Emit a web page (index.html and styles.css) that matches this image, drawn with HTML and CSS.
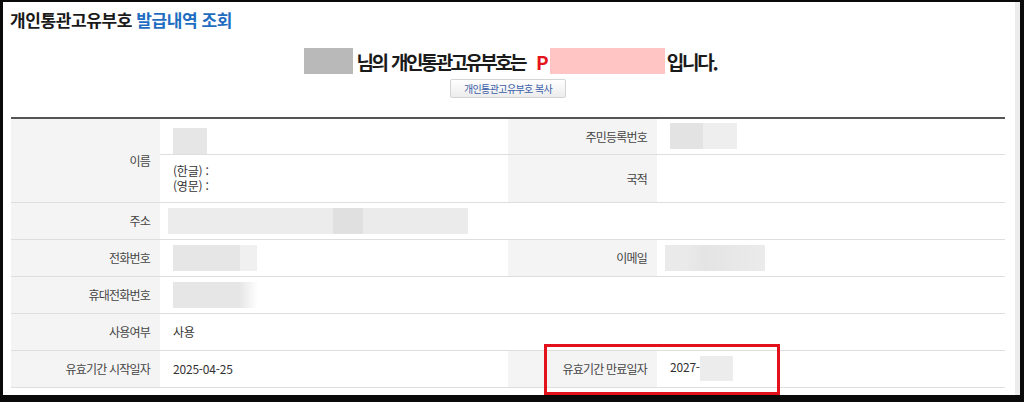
FILE: index.html
```html
<!DOCTYPE html>
<html lang="ko">
<head>
    <meta charset="UTF-8">
    <meta name="viewport" content="width=device-width, initial-scale=1.0">
    <title>개인통관고유부호 발급내역 조회</title>
    <link rel="stylesheet" href="styles.css">
</head>
<body>
    <div class="capture">
        <h2 class="page-title">개인통관고유부호 <span class="accent">발급내역 조회</span></h2>

        <div class="result-line">
            <span class="mask mask-name"></span>
            <span class="result-text">님의 개인통관고유부호는</span>
            <span class="code-prefix">P</span>
            <span class="mask mask-code"></span>
            <span class="result-tail">입니다.</span>
        </div>
        <div class="copy-row">
            <button class="copy-btn">개인통관고유부호 복사</button>
        </div>

        <table class="info-table">
            <colgroup>
                <col class="col-label">
                <col class="col-value">
                <col class="col-label">
                <col class="col-value">
            </colgroup>
            <tr class="row-a">
                <th rowspan="2">이름</th>
                <td class="cell-top"><span class="blur blur-name"></span></td>
                <th>주민등록번호</th>
                <td><span class="blur blur-rrn"></span></td>
            </tr>
            <tr class="row-b">
                <td class="two-lines">(한글) :<br>(영문) :</td>
                <th>국적</th>
                <td></td>
            </tr>
            <tr>
                <th>주소</th>
                <td colspan="3" class="pad-less"><span class="blur blur-addr"></span></td>
            </tr>
            <tr>
                <th>전화번호</th>
                <td><span class="blur blur-phone"></span></td>
                <th>이메일</th>
                <td class="pad-less"><span class="blur blur-mail"></span></td>
            </tr>
            <tr>
                <th>휴대전화번호</th>
                <td colspan="3"><span class="blur blur-mobile"></span></td>
            </tr>
            <tr>
                <th>사용여부</th>
                <td colspan="3">사용</td>
            </tr>
            <tr>
                <th>유효기간 시작일자</th>
                <td>2025-04-25</td>
                <th>유효기간 만료일자</th>
                <td>2027-<span class="blur blur-date"></span></td>
            </tr>
        </table>

        <div class="highlight-box"></div>
    </div>
</body>
</html>
```

FILE: styles.css
```css
* {
    box-sizing: border-box;
}

html, body {
    margin: 0;
    padding: 0;
    background: #0a0a0a;
}

body {
    font-family: "Noto Sans CJK KR", "Noto Sans", sans-serif;
    color: #333;
}

.capture {
    position: relative;
    width: 1017px;
    height: 393px;
    margin: 2px 0 0 3px;
    padding: 7px 10px 0 8px;
    background: #fff;
    border-right: 5px solid #ececec;
}

.page-title {
    margin: 0 0 0 -1px;
    font-size: 17px;
    line-height: 22px;
    font-weight: 700;
    letter-spacing: -0.4px;
    color: #1a1a1a;
}

.page-title .accent {
    color: #1f6dc1;
}

/* 결과 문구 */
.result-line {
    display: flex;
    justify-content: center;
    align-items: center;
    height: 28px;
    margin-top: 16px;
    padding-left: 4px;
    font-size: 19px;
    font-weight: 700;
    color: #1a1a1a;
    letter-spacing: -2.6px;
    word-spacing: 2px;
}

.mask {
    display: inline-block;
    height: 26px;
}

.mask-name {
    width: 49px;
    background: #b9b9b9;
    margin-right: 4px;
}

.mask-code {
    width: 115px;
    background: #ffc5c5;
    margin-right: 2px;
}

.code-prefix {
    color: #e5141c;
    margin-left: 11px;
    margin-right: 1px;
    letter-spacing: 0;
}

.result-tail {
    letter-spacing: -2.2px;
}

.copy-row {
    display: flex;
    justify-content: center;
    margin-top: 4px;
}

.copy-btn {
    width: 116px;
    height: 19px;
    padding: 0;
    border: 1px solid #d4d4d4;
    border-radius: 2px;
    background: linear-gradient(#ffffff, #ececec);
    font-family: inherit;
    font-size: 10px;
    letter-spacing: -0.6px;
    color: #3b5ea8;
    line-height: 17px;
}

/* 발급내역 표 */
.info-table {
    width: 994px;
    margin-top: 19px;
    border-collapse: collapse;
    border-top: 2px solid #555;
    table-layout: fixed;
    font-size: 12px;
}

.col-label {
    width: 149px;
}

.col-value {
    width: 348px;
}

.info-table tr {
    height: 37px;
}

.info-table .row-a {
    height: 36px;
}

.info-table .row-b {
    height: 48px;
}

.info-table th,
.info-table td {
    padding: 0 13px;
    border-bottom: 1px solid #dedede;
    vertical-align: middle;
}

.info-table th {
    background: #f4f4f4;
    text-align: right;
    font-weight: 400;
    color: #444;
    letter-spacing: -0.8px;
    padding-right: 10px;
}

.info-table td {
    background: #fff;
    color: #333;
    letter-spacing: -0.2px;
}

.info-table td.cell-top {
    vertical-align: bottom;
    padding-bottom: 0;
}

.info-table td.pad-less {
    padding-left: 8px;
}

.two-lines {
    line-height: 15px;
}

.blur {
    display: inline-block;
    height: 26px;
    vertical-align: middle;
    background: #e6e6e6;
}

.blur-name {
    width: 34px;
    display: block;
}

.blur-rrn {
    width: 67px;
    background: linear-gradient(90deg, #e3e3e3 0 50%, #eeeeee 50% 100%);
}

.blur-addr {
    width: 300px;
    background: linear-gradient(90deg, #ececec 0 55%, #e0e0e0 55% 65%, #ebebeb 65% 100%);
}

.blur-phone {
    width: 84px;
    background: linear-gradient(90deg, #e6e6e6 0 80%, #f0f0f0 80% 100%);
}

.blur-mobile {
    width: 85px;
    background: linear-gradient(90deg, #e6e6e6 0 78%, #ffffff 100%);
}

.blur-mail {
    width: 100px;
    background: linear-gradient(90deg, #eaeaea 0 20%, #e4e4e4 40%, #ebebeb 100%);
}

.blur-date {
    width: 33px;
    height: 25px;
    background: #ececec;
}

/* 만료일자 강조 표시 */
.highlight-box {
    position: absolute;
    left: 541px;
    top: 342px;
    width: 236px;
    height: 51px;
    border: 3px solid #e3111b;
}
```
